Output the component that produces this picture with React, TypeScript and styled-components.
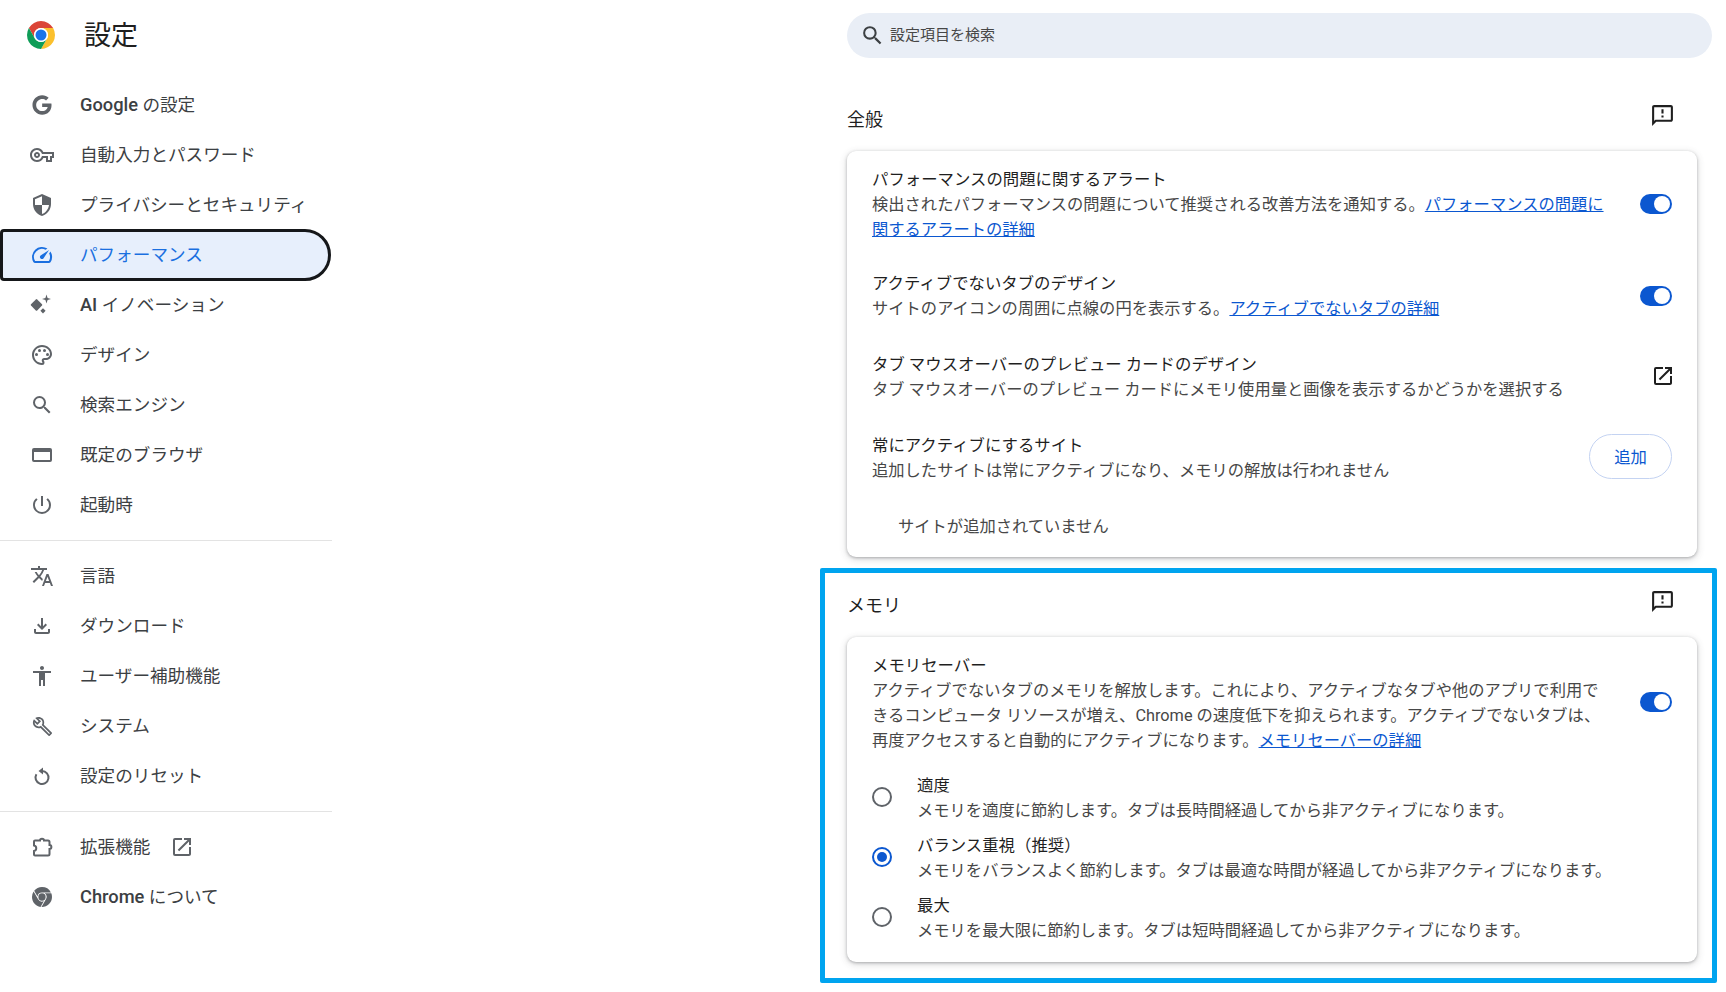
import React from "react";
import styled, { createGlobalStyle } from "styled-components";
import {
  MdOutlineVpnKey, MdSecurity, MdOutlineSpeed, MdOutlinePalette, MdSearch,
  MdOutlinePowerSettingsNew, MdTranslate, MdOutlineFileDownload, MdAccessibility, MdOutlineBuild,
  MdOutlineOpenInNew, MdOutlineFeedback,
} from "react-icons/md";
import { FaGoogle } from "react-icons/fa";
import { SiGooglechrome } from "react-icons/si";

const Global = createGlobalStyle`
  html, body { margin: 0; padding: 0; background: #fff; overflow: hidden; }
  body { font-family: Roboto, "Noto Sans CJK JP", sans-serif; color: #1f1f1f; }
  * { box-sizing: border-box; }
`;

const Page = styled.div`
  display: grid;
  grid-template-columns: 332px 1fr;
  width: 1726px;
  height: 992px;
  overflow: hidden;
`;

const Sidebar = styled.aside`
  display: flex;
  flex-direction: column;
`;

const Brand = styled.header`
  display: flex;
  align-items: center;
  gap: 29px;
  height: 70px;
  margin-bottom: 10px;
  padding-left: 27px;
`;

const BrandTitle = styled.h1`
  margin: 0;
  padding-bottom: 4px;
  font-size: 27px;
  font-weight: 400;
  color: #1f1f1f;
`;

const NavRow = styled.a<{ $active?: boolean }>`
  display: flex;
  align-items: center;
  gap: 26px;
  font-size: 17.6px;
  color: ${(p) => (p.$active ? "#1a6fe0" : "#3c4043")};
  height: ${(p) => (p.$active ? "52px" : "50px")};
  margin: ${(p) => (p.$active ? "-1px 1px -1px 0" : "0")};
  padding-left: ${(p) => (p.$active ? "27px" : "30px")};
  background: ${(p) => (p.$active ? "#e7effc" : "transparent")};
  border: ${(p) => (p.$active ? "3px solid #15171a" : "0")};
  border-radius: ${(p) => (p.$active ? "4px 26px 26px 4px" : "0")};
`;

const NavLabel = styled.span`
  padding-bottom: 3px;
`;

const NavIcon = styled.span<{ $active?: boolean }>`
  display: flex;
  width: 24px;
  height: 24px;
  align-items: center;
  justify-content: center;
  flex: none;
  color: ${(p) => (p.$active ? "#1a6fe0" : "#5f6368")};
  font-size: 24px;
`;

const LatinWord = styled.span`
  font-size: 18.3px;
  font-weight: 500;
`;

const ExternalNav = styled.span`
  display: flex;
  margin-left: -6px;
  color: #5f6368;
  font-size: 24px;
`;

const NavDivider = styled.hr`
  width: 332px;
  height: 1px;
  margin: 10px 0;
  border: 0;
  background: #e3e3e3;
`;

const Main = styled.main`
  display: flex;
  flex-direction: column;
  align-items: flex-start;
  padding: 13px 0 0 488px;
`;

const SearchBar = styled.div`
  display: flex;
  align-items: center;
  gap: 5px;
  width: 865px;
  height: 45px;
  margin: 0 0 42px 27px;
  padding-left: 13px;
  border-radius: 23px;
  background: #e9eef6;
  font-size: 15px;
  color: #474747;
`;

const SearchLabel = styled.span`
  padding-bottom: 4px;
`;

const SearchGlyph = styled.span`
  display: flex;
  font-size: 25px;
  color: #3c4043;
`;

const PlainSection = styled.section`
  margin: 0 0 11px 27px;
`;

const FramedSection = styled.section`
  width: 897px;
  padding: 13px 0 16px 22px;
  border: 5px solid #00a4ef;
  border-radius: 2px;
`;

const SectionHead = styled.div<{ $after: string }>`
  display: flex;
  justify-content: space-between;
  align-items: center;
  width: 850px;
  height: 40px;
  margin-bottom: ${(p) => p.$after};
  padding-right: 22px;
`;

const SectionTitle = styled.h2`
  margin: 0;
  padding-bottom: 5px;
  font-size: 18px;
  font-weight: 400;
  color: #1f1f1f;
`;

const FeedbackGlyph = styled.span`
  display: flex;
  margin-bottom: 9px;
  font-size: 25px;
  color: #1f1f1f;
`;

const Card = styled.div<{ $tail: string }>`
  width: 850px;
  padding: 0.5px 0 ${(p) => p.$tail} 0;
  border-radius: 9px;
  background: #fff;
  box-shadow: 0 1px 3px rgba(60, 64, 67, 0.35), 0 2px 7px 1px rgba(60, 64, 67, 0.16);
`;

const Row = styled.div<{ $pad?: string }>`
  display: flex;
  align-items: center;
  justify-content: space-between;
  padding: ${(p) => p.$pad ?? "15.5px 25px"};
`;

const RowText = styled.div`
  width: 735px;
  line-height: 25px;
`;

const RowTitle = styled.div`
  font-size: 16.4px;
  color: #1f1f1f;
`;

const RowDesc = styled.div`
  font-size: 16.3px;
  color: #474747;
`;

const DocLink = styled.a`
  color: #0b57d0;
  text-decoration: underline;
`;

const Toggle = styled.span<{ $lift?: string }>`
  display: flex;
  justify-content: flex-end;
  align-items: center;
  flex: none;
  width: 32px;
  height: 20px;
  margin-bottom: ${(p) => p.$lift ?? "0"};
  padding-right: 2px;
  border-radius: 10px;
  background: #0b57d0;
  &::after {
    content: "";
    width: 16px;
    height: 16px;
    border-radius: 50%;
    background: #fff;
  }
`;

const ExternalGlyph = styled.span`
  display: flex;
  margin: 0 -3px 2px 0;
  font-size: 24px;
  color: #1f1f1f;
`;

const AddButton = styled.button`
  width: 85px;
  height: 45px;
  margin-bottom: 2px;
  padding: 0 0 2px;
  border: 1px solid #c4d3f2;
  border-radius: 23px;
  background: #fff;
  font: inherit;
  font-size: 16.4px;
  color: #0b57d0;
`;

const EmptyNote = styled.div`
  padding: 15.5px 0 1px 51px;
  font-size: 16.3px;
  line-height: 25px;
  color: #474747;
`;

const RadioList = styled.div`
  display: flex;
  flex-direction: column;
  gap: 10px;
  padding: 5px 25px 0;
`;

const RadioRow = styled.div`
  display: flex;
  align-items: center;
  gap: 25px;
  line-height: 25px;
`;

const RadioMark = styled.span<{ $on?: boolean }>`
  display: flex;
  align-items: center;
  justify-content: center;
  flex: none;
  width: 20px;
  height: 20px;
  margin-bottom: 2px;
  border-radius: 50%;
  border: 2px solid ${(p) => (p.$on ? "#0b57d0" : "#5f6368")};
  &::after {
    content: "";
    display: ${(p) => (p.$on ? "block" : "none")};
    width: 10px;
    height: 10px;
    border-radius: 50%;
    background: #0b57d0;
  }
`;

const ChromeLogo = () => (
  <svg width="28" height="28" viewBox="0 0 24 24" aria-hidden="true">
    <path fill="#db4437" d="M1.61 6A12 12 0 0 1 22.39 6H12A6 6 0 0 0 6.804 15Z" />
    <path fill="#fbc02d" d="M22.39 6A12 12 0 0 1 12 24L17.196 15A6 6 0 0 0 12 6Z" />
    <path fill="#0f9d58" d="M12 24A12 12 0 0 1 1.61 6L6.804 15A6 6 0 0 0 17.196 15Z" />
    <circle cx="12" cy="12" r="6" fill="#fff" />
    <circle cx="12" cy="12" r="4.7" fill="#1a73e8" />
  </svg>
);

const Sparkle = () => (
  <svg width="24" height="24" viewBox="0 0 24 24" fill="currentColor" aria-hidden="true">
    <path d="M5.8 6.4a1 1 0 0 1 1.4 0l4.8 4.8a1 1 0 0 1 0 1.4l-4.8 4.8a1 1 0 0 1-1.4 0L1 12.6a1 1 0 0 1 0-1.4z" />
    <path d="M16.5 1.5l1.1 3.4 3.4 1.1-3.4 1.1-1.1 3.4-1.1-3.4-3.4-1.1 3.4-1.1z" />
    <path d="M13 15.2l2.6 2.6-2.6 2.6-2.6-2.6z" />
  </svg>
);

const BrowserGlyph = () => (
  <svg width="24" height="24" viewBox="0 0 24 24" fill="currentColor" fillRule="evenodd" aria-hidden="true">
    <path d="M4 5h16a2 2 0 0 1 2 2v10a2 2 0 0 1-2 2H4a2 2 0 0 1-2-2V7a2 2 0 0 1 2-2zM4 9v8h16V9z" />
  </svg>
);

const ExtensionGlyph = () => (
  <svg width="24" height="24" viewBox="0 0 24 24" fill="none" stroke="currentColor" strokeWidth="2" aria-hidden="true">
    <path d="M5 5.5H10C10 3 14 3 14 5.5H18a1.5 1.5 0 0 1 1.5 1.5V10C22 10 22 14 19.5 14V19a1.5 1.5 0 0 1-1.5 1.5H5a1 1 0 0 1-1-1V16C7 15.5 7 11 4 10.5V6.5a1 1 0 0 1 1-1z" />
  </svg>
);

const ResetGlyph = () => (
  <svg width="24" height="24" viewBox="0 0 24 24" aria-hidden="true">
    <path d="M12 7A6.5 6.5 0 1 1 6.4 10.2" fill="none" stroke="currentColor" strokeWidth="2" />
    <path d="M13 3.5L8.5 7 13 10.5z" fill="currentColor" />
  </svg>
);

type Item = { icon: React.ReactNode; label: React.ReactNode; active?: boolean; external?: boolean };

const groupA: Item[] = [
  { icon: <FaGoogle size={20} />, label: <><LatinWord>Google</LatinWord> の設定</> },
  { icon: <MdOutlineVpnKey />, label: "自動入力とパスワード" },
  { icon: <MdSecurity />, label: "プライバシーとセキュリティ" },
  { icon: <MdOutlineSpeed />, label: "パフォーマンス", active: true },
  { icon: <Sparkle />, label: <><LatinWord>AI</LatinWord> イノベーション</> },
  { icon: <MdOutlinePalette />, label: "デザイン" },
  { icon: <MdSearch />, label: "検索エンジン" },
  { icon: <BrowserGlyph />, label: "既定のブラウザ" },
  { icon: <MdOutlinePowerSettingsNew />, label: "起動時" },
];
const groupB: Item[] = [
  { icon: <MdTranslate />, label: "言語" },
  { icon: <MdOutlineFileDownload />, label: "ダウンロード" },
  { icon: <MdAccessibility />, label: "ユーザー補助機能" },
  { icon: <MdOutlineBuild size={21} />, label: "システム" },
  { icon: <ResetGlyph />, label: "設定のリセット" },
];
const groupC: Item[] = [
  { icon: <ExtensionGlyph />, label: "拡張機能", external: true },
  { icon: <SiGooglechrome size={20} />, label: <><LatinWord>Chrome</LatinWord> について</> },
];

const NavGroup = ({ items }: { items: Item[] }) => (
  <>
    {items.map((it, i) => (
      <NavRow key={i} $active={it.active}>
        <NavIcon $active={it.active}>{it.icon}</NavIcon>
        <NavLabel>{it.label}</NavLabel>
        {it.external && <ExternalNav><MdOutlineOpenInNew /></ExternalNav>}
      </NavRow>
    ))}
  </>
);

const memoryModes = [
  { title: "適度", desc: "メモリを適度に節約します。タブは長時間経過してから非アクティブになります。" },
  { title: "バランス重視（推奨）", desc: "メモリをバランスよく節約します。タブは最適な時間が経過してから非アクティブになります。", on: true },
  { title: "最大", desc: "メモリを最大限に節約します。タブは短時間経過してから非アクティブになります。" },
];

export default function App() {
  return (
    <Page>
      <Global />
      <Sidebar>
        <Brand>
          <ChromeLogo />
          <BrandTitle>設定</BrandTitle>
        </Brand>
        <NavGroup items={groupA} />
        <NavDivider />
        <NavGroup items={groupB} />
        <NavDivider />
        <NavGroup items={groupC} />
      </Sidebar>
      <Main>
        <SearchBar>
          <SearchGlyph><MdSearch /></SearchGlyph>
          <SearchLabel>設定項目を検索</SearchLabel>
        </SearchBar>

        <PlainSection>
          <SectionHead $after="11px">
            <SectionTitle>全般</SectionTitle>
            <FeedbackGlyph><MdOutlineFeedback /></FeedbackGlyph>
          </SectionHead>
          <Card $tail="17.5px">
            <Row $pad="15px 25px 13.5px">
              <RowText>
                <RowTitle>パフォーマンスの問題に関するアラート</RowTitle>
                <RowDesc>
                  検出されたパフォーマンスの問題について推奨される改善方法を通知する。
                  <DocLink>パフォーマンスの問題に関するアラートの詳細</DocLink>
                </RowDesc>
              </RowText>
              <Toggle />
            </Row>
            <Row>
              <RowText>
                <RowTitle>アクティブでないタブのデザイン</RowTitle>
                <RowDesc>
                  サイトのアイコンの周囲に点線の円を表示する。
                  <DocLink>アクティブでないタブの詳細</DocLink>
                </RowDesc>
              </RowText>
              <Toggle />
            </Row>
            <Row>
              <RowText>
                <RowTitle>タブ マウスオーバーのプレビュー カードのデザイン</RowTitle>
                <RowDesc>タブ マウスオーバーのプレビュー カードにメモリ使用量と画像を表示するかどうかを選択する</RowDesc>
              </RowText>
              <ExternalGlyph><MdOutlineOpenInNew /></ExternalGlyph>
            </Row>
            <Row>
              <RowText>
                <RowTitle>常にアクティブにするサイト</RowTitle>
                <RowDesc>追加したサイトは常にアクティブになり、メモリの解放は行われません</RowDesc>
              </RowText>
              <AddButton>追加</AddButton>
            </Row>
            <EmptyNote>サイトが追加されていません</EmptyNote>
          </Card>
        </PlainSection>

        <FramedSection>
          <SectionHead $after="11px">
            <SectionTitle>メモリ</SectionTitle>
            <FeedbackGlyph><MdOutlineFeedback /></FeedbackGlyph>
          </SectionHead>
          <Card $tail="19.5px">
            <Row $pad="15px 25px">
              <RowText>
                <RowTitle>メモリセーバー</RowTitle>
                <RowDesc>
                  アクティブでないタブのメモリを解放します。これにより、アクティブなタブや他のアプリで利用できるコンピュータ リソースが増え、Chrome の速度低下を抑えられます。アクティブでないタブは、再度アクセスすると自動的にアクティブになります。
                  <DocLink>メモリセーバーの詳細</DocLink>
                </RowDesc>
              </RowText>
              <Toggle $lift="2px" />
            </Row>
            <RadioList>
              {memoryModes.map((m) => (
                <RadioRow key={m.title}>
                  <RadioMark $on={m.on} />
                  <div>
                    <RowTitle>{m.title}</RowTitle>
                    <RowDesc>{m.desc}</RowDesc>
                  </div>
                </RadioRow>
              ))}
            </RadioList>
          </Card>
        </FramedSection>
      </Main>
    </Page>
  );
}
